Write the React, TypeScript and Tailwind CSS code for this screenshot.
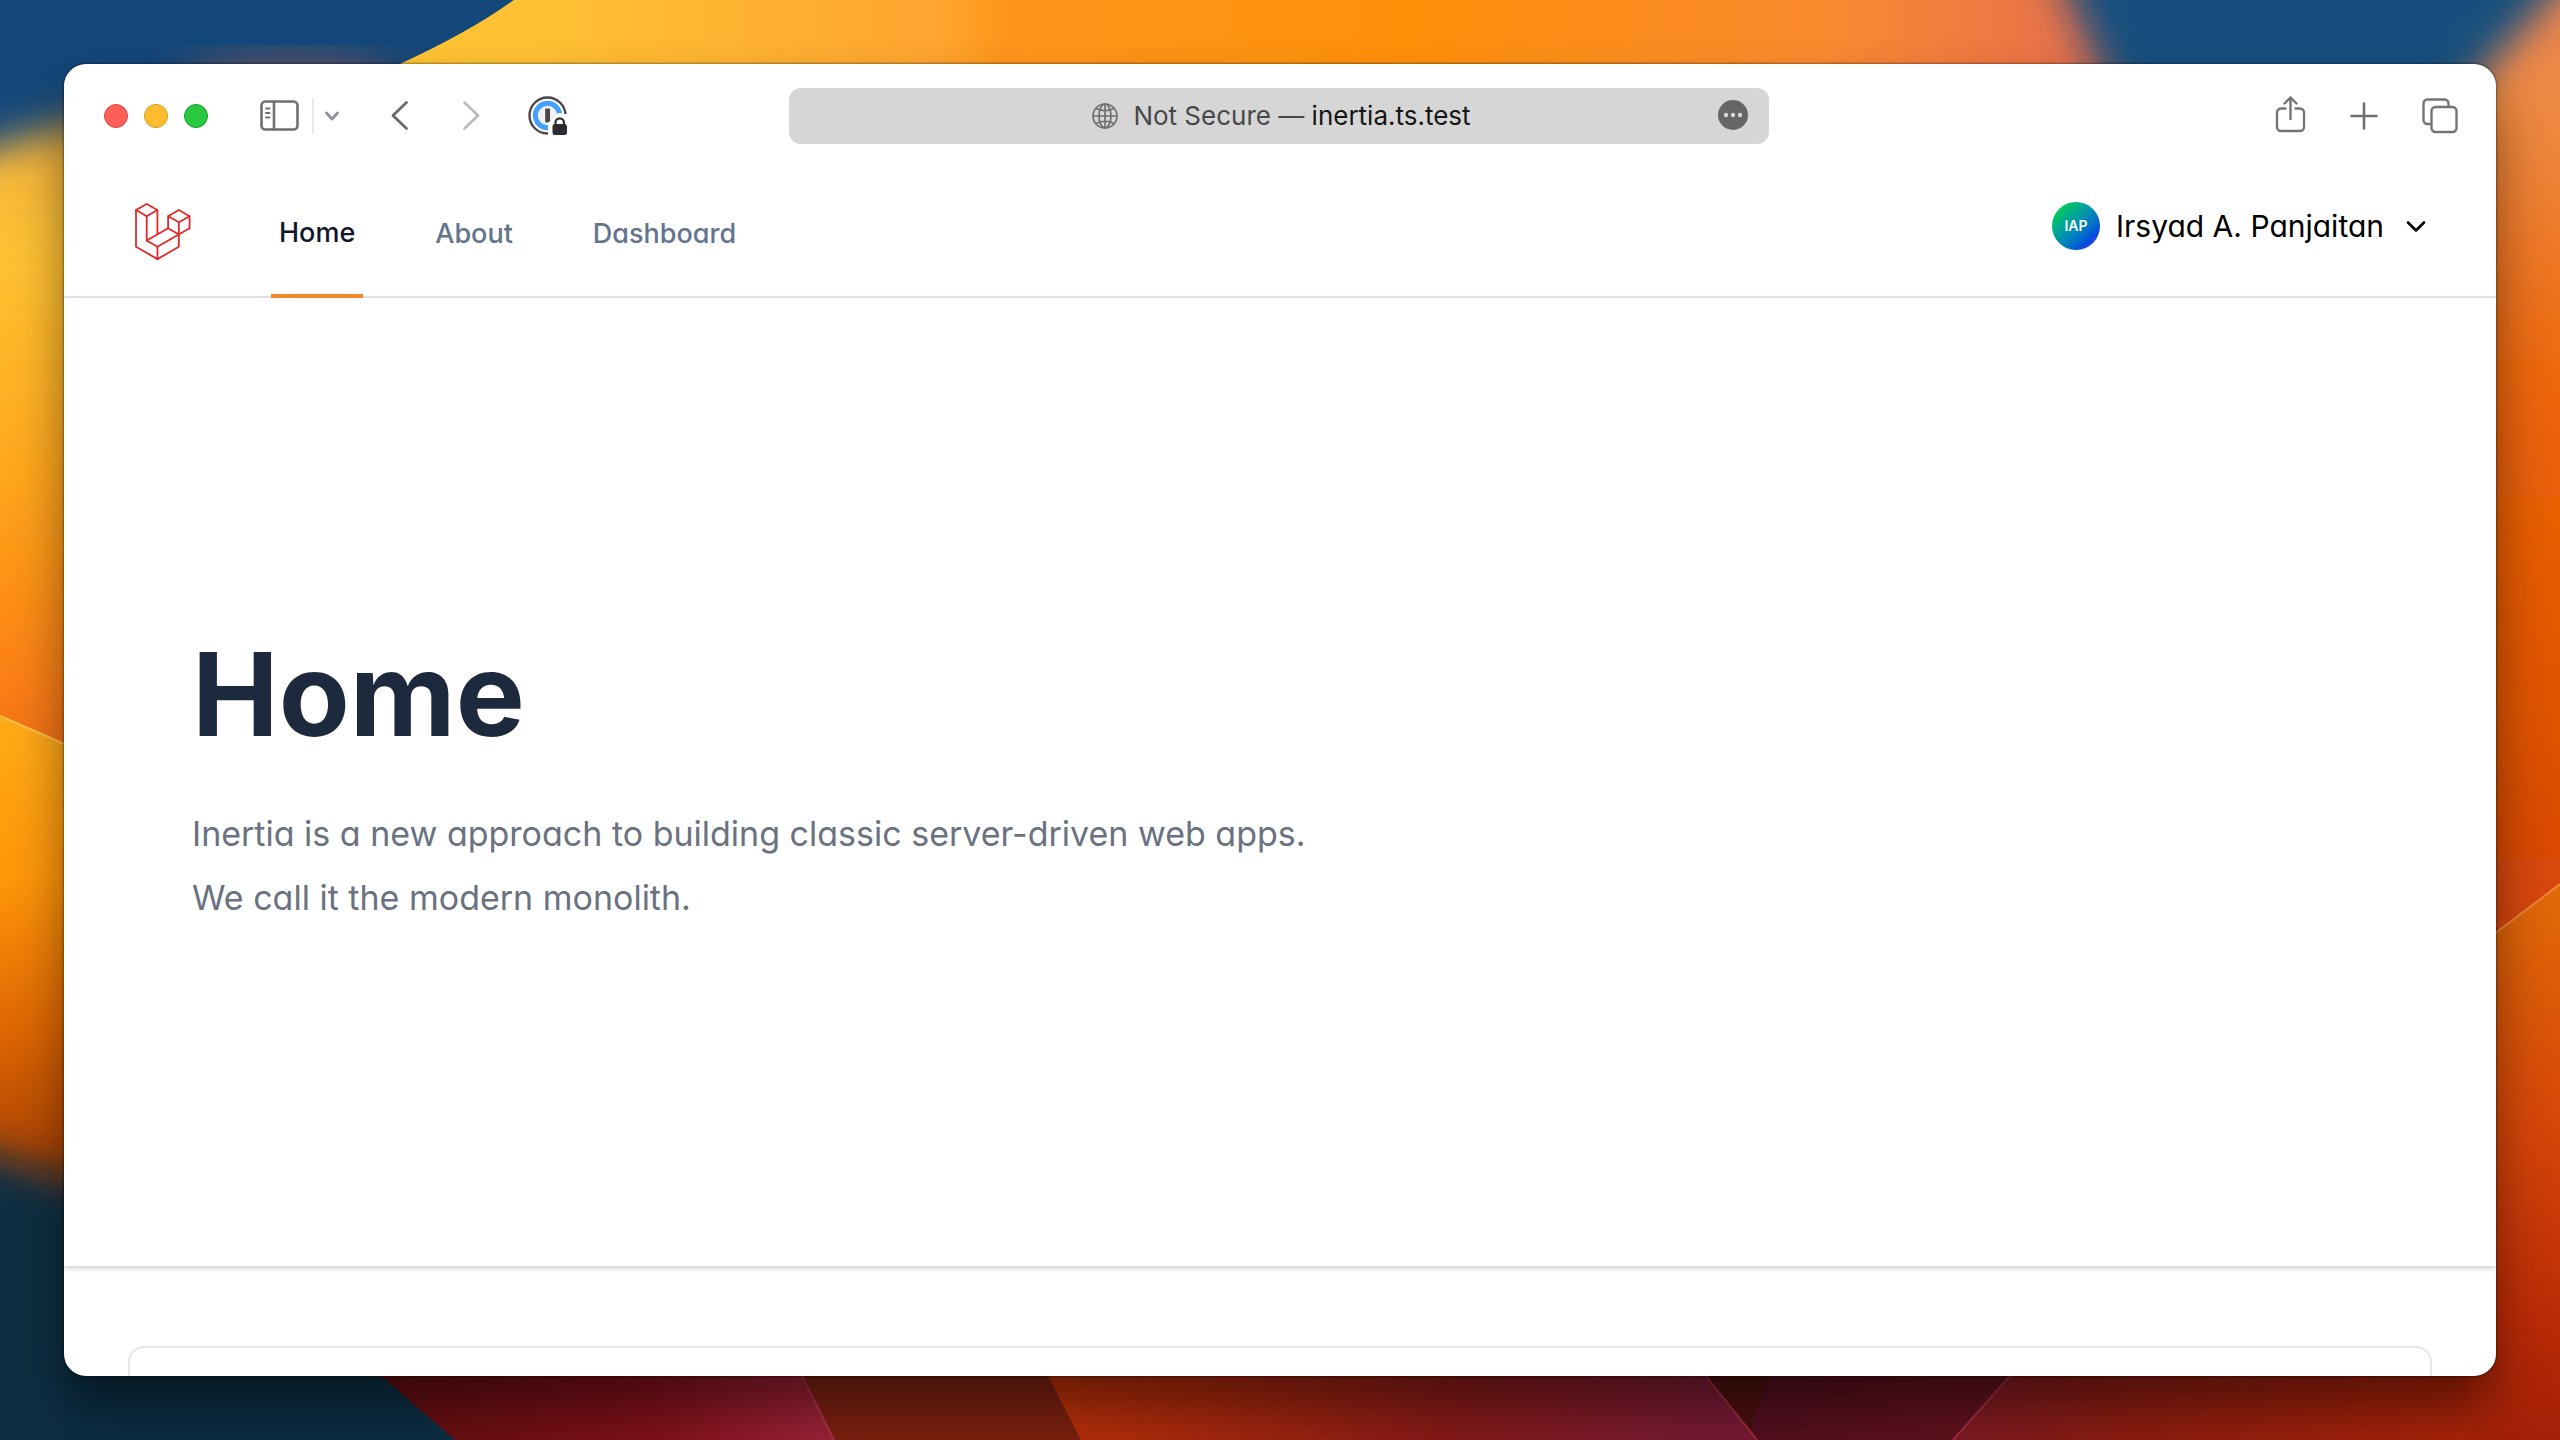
import type { ReactNode } from "react";

function Wallpaper() {
  return (
    <svg
      aria-hidden="true"
      className="absolute inset-0 h-full w-full"
      viewBox="0 0 2560 1440"
      preserveAspectRatio="none"
    >
      <defs>
        <filter id="soft" x="-30%" y="-30%" width="160%" height="160%">
          <feGaussianBlur stdDeviation="20" />
        </filter>
        <linearGradient id="topBand" gradientUnits="userSpaceOnUse" x1="400" y1="0" x2="2080" y2="0">
          <stop offset="0" stopColor="#ffc433" />
          <stop offset="0.1" stopColor="#ffbf33" />
          <stop offset="0.32" stopColor="#ffa530" />
          <stop offset="0.36" stopColor="#ff961c" />
          <stop offset="0.6" stopColor="#ff900a" />
          <stop offset="0.85" stopColor="#fa8a30" />
          <stop offset="1" stopColor="#e8704c" />
        </linearGradient>
        <linearGradient id="leftUpper" x1="0" y1="0" x2="0" y2="1">
          <stop offset="0" stopColor="#f0b040" />
          <stop offset="0.2" stopColor="#ffc233" />
          <stop offset="0.5" stopColor="#ffa51c" />
          <stop offset="0.75" stopColor="#fc8114" />
          <stop offset="1" stopColor="#e85a12" />
        </linearGradient>
        <linearGradient id="leftLower" x1="0" y1="0" x2="0" y2="1">
          <stop offset="0" stopColor="#ffab18" />
          <stop offset="0.3" stopColor="#ff960a" />
          <stop offset="0.58" stopColor="#dd6603" />
          <stop offset="0.8" stopColor="#b04503" />
          <stop offset="1" stopColor="#803a20" />
        </linearGradient>
        <linearGradient id="rightUpper" x1="0" y1="0" x2="0" y2="1">
          <stop offset="0" stopColor="#e88058" />
          <stop offset="0.15" stopColor="#ef8a42" />
          <stop offset="0.4" stopColor="#ec6408" />
          <stop offset="0.7" stopColor="#dd5203" />
          <stop offset="1" stopColor="#cf360f" />
        </linearGradient>
        <linearGradient id="rightLower" x1="0" y1="0" x2="0" y2="1">
          <stop offset="0" stopColor="#e26a08" />
          <stop offset="0.45" stopColor="#d44509" />
          <stop offset="0.8" stopColor="#b82a07" />
          <stop offset="1" stopColor="#a32008" />
        </linearGradient>
        <linearGradient id="red" x1="0" y1="0" x2="1" y2="0">
          <stop offset="0" stopColor="#5c0e10" />
          <stop offset="0.6" stopColor="#7d1018" />
          <stop offset="1" stopColor="#9c2238" />
        </linearGradient>
        <linearGradient id="ember" x1="0" y1="0" x2="1" y2="0.1">
          <stop offset="0" stopColor="#c23508" />
          <stop offset="0.3" stopColor="#a8280c" />
          <stop offset="0.65" stopColor="#861a18" />
          <stop offset="1" stopColor="#761a34" />
        </linearGradient>
        <linearGradient id="maroon" x1="0" y1="0" x2="1" y2="0">
          <stop offset="0" stopColor="#4c0e20" />
          <stop offset="1" stopColor="#66131a" />
        </linearGradient>
        <linearGradient id="bottomRight" x1="0" y1="0" x2="1" y2="0">
          <stop offset="0" stopColor="#7c1a24" />
          <stop offset="0.3" stopColor="#8a1c12" />
          <stop offset="1" stopColor="#a82208" />
        </linearGradient>
      </defs>
      <rect width="2560" height="1440" fill="#14477a" />
      <path d="M514 0 Q470 32 400 64 V200 H2400 V0Z" fill="url(#topBand)" />
      <path d="M2040 -80 L2070 0 L2130 140 V240 H2700 V-80Z" fill="#14507d" filter="url(#soft)" />
      <path d="M514 0 Q470 32 400 64 H0 V0Z" fill="#14477a" />
      <ellipse cx="290" cy="84" rx="110" ry="24" fill="#8a5a55" opacity="0.8" filter="url(#soft)" />
      <path d="M514 0 Q470 32 400 64 H560 V0Z" fill="url(#topBand)" />
      <path d="M-80 170 L120 110 V860 H-80Z" fill="url(#leftUpper)" filter="url(#soft)" />
      <path d="M0 716 L120 768 V1260 H0Z" fill="url(#leftLower)" />
      <path d="M-80 1130 L160 1210 V1500 H-80Z" fill="#0b2d42" filter="url(#soft)" />
      <path d="M0 716 L120 768" stroke="#ffc04a" strokeWidth="2" />
      <path d="M2450 110 L2600 -60 H2700 V1100 H2400 V110Z" fill="url(#rightUpper)" filter="url(#soft)" />
      <path d="M2440 975 L2560 884 V1440 H2440Z" fill="url(#rightLower)" />
      <path d="M2440 975 L2560 884" stroke="#ec8838" strokeWidth="2" />
      <path d="M64 1300 H400 L455 1440 H64Z" fill="#0b2d42" />
      <path d="M350 1300 L381 1376 L455 1440 H836 L790 1300Z" fill="url(#red)" />
      <path d="M790 1300 L802 1376 L834 1440 H1084 L1030 1300Z" fill="#7a2010" />
      <path d="M1030 1300 L1048 1376 L1081 1440 H1760 L1680 1300Z" fill="url(#ember)" />
      <path d="M1680 1300 L1706 1376 L1757 1440 H1960 L2100 1300Z" fill="url(#maroon)" />
      <path d="M1660 1320 L1706 1376 L1750 1430 L1770 1376 V1320Z" fill="#4a100e" />
      <path d="M2100 1300 L2010 1376 L1953 1440 H2470 V1300Z" fill="url(#bottomRight)" />
      <path d="M1706 1376 L1757 1440 M2010 1376 L1953 1440" stroke="#a02a40" strokeWidth="2" />
      <path d="M802 1376 L834 1440" stroke="#a83048" strokeWidth="2" />
    </svg>
  );
}

function ToolButton({ label, className, children }: { label: string; className?: string; children: ReactNode }) {
  return (
    <button type="button" aria-label={label} className={className}>
      {children}
    </button>
  );
}

function SidebarIcon() {
  return (
    <svg className="h-8 w-10" viewBox="0 0 40 32" fill="none" stroke="#6f6f6f" strokeWidth="2.6" strokeLinecap="round">
      <rect x="1.5" y="1.5" width="36" height="28" rx="4" />
      <path d="M14 2 V29" />
      <path d="M6 8.5 H9.5 M6 13 H9.5 M6 17.5 H9.5" strokeWidth="1.8" />
    </svg>
  );
}

function PasswordIcon() {
  return (
    <svg className="size-10" viewBox="0 0 40 40">
      <circle cx="19.5" cy="19.5" r="18" fill="#fff" stroke="#4b4548" strokeWidth="2.4" />
      <circle cx="19.5" cy="19.5" r="12.2" fill="#f1f1f3" stroke="#46a0ff" strokeWidth="5" />
      <rect x="17.2" y="12.5" width="4.8" height="14" rx="0.8" fill="#4b4548" />
      <path d="M20 40 V27 L25 22 a7 7 0 0 1 10 -4 H40 V40Z" fill="#fff" />
      <rect x="24.5" y="28" width="14.5" height="11" rx="2.5" fill="#2e2c30" />
      <path d="M27.5 29 V26.5 a4.2 4.2 0 0 1 8.4 0 V29" fill="none" stroke="#2e2c30" strokeWidth="2.2" />
    </svg>
  );
}

function GlobeIcon() {
  return (
    <svg aria-hidden="true" className="size-7" viewBox="0 0 28 28" fill="none" stroke="#6f6f6f" strokeWidth="1.7">
      <circle cx="14" cy="14" r="12" />
      <ellipse cx="14" cy="14" rx="6" ry="12" />
      <path d="M14 2 V26 M2 14 H26 M5 6.5 Q14 11 23 6.5 M5 21.5 Q14 17 23 21.5" />
    </svg>
  );
}

function LaravelLogo() {
  return (
    <svg className="h-[58px] w-14" viewBox="0 0 50 52" fill="none" stroke="#e02826" strokeWidth="1.6" strokeLinejoin="round" strokeLinecap="round">
      <path d="M0.8 6.3 L10.4 0.9 L20 6.3 L10.4 11.9Z" />
      <path d="M0.8 6.3 V39.2 L20 50.3 L39.2 39.2 V28.3" />
      <path d="M10.4 11.9 V33.7 L20 39.2 V50.3" />
      <path d="M20 6.3 V28.2 M10.4 33.7 L29.6 22.7 M20 39.2 L48.8 22.7" />
      <path d="M29.6 11.8 L39.2 6.2 L48.8 11.8 L39.2 17.3Z" />
      <path d="M29.6 11.8 V22.7 L39.2 28.2 V17.3 M48.8 11.8 V22.7" />
    </svg>
  );
}

function Toolbar() {
  return (
    <div className="grid h-[104px] shrink-0 grid-cols-[1fr_minmax(0,980px)_1fr] items-center pr-[38px] pl-9">
      <div className="ml-1 flex items-center">
        <div className="flex gap-4">
          <button type="button" aria-label="Close" className="size-6 rounded-full border border-[#d9473f] bg-[#ff5f57]" />
          <button type="button" aria-label="Minimize" className="size-6 rounded-full border border-[#d39a22] bg-[#febc2e]" />
          <button type="button" aria-label="Zoom" className="size-6 rounded-full border border-[#1f9a32] bg-[#28c840]" />
        </div>
        <ToolButton label="Show sidebar" className="ml-13">
          <SidebarIcon />
        </ToolButton>
        <span className="ml-3 h-9 w-0.5 bg-[#ececec]" />
        <ToolButton label="Tab groups" className="ml-2.5">
          <svg className="size-4" viewBox="0 0 16 16" fill="none" stroke="#8e9196" strokeWidth="2.8" strokeLinecap="round" strokeLinejoin="round">
            <path d="M2.5 5 L8 11 L13.5 5" />
          </svg>
        </ToolButton>
        <ToolButton label="Back" className="ml-12.5">
          <svg className="h-8 w-5" viewBox="0 0 20 32" fill="none" stroke="#6a6a6a" strokeWidth="2.8" strokeLinecap="round" strokeLinejoin="round">
            <path d="M16.5 2.5 L3 15.5 L16.5 28.5" />
          </svg>
        </ToolButton>
        <ToolButton label="Forward" className="ml-13">
          <svg className="h-8 w-5" viewBox="0 0 20 32" fill="none" stroke="#bdbdbf" strokeWidth="2.8" strokeLinecap="round" strokeLinejoin="round">
            <path d="M2.5 2.5 L16 15.5 L2.5 28.5" />
          </svg>
        </ToolButton>
        <ToolButton label="1Password" className="ml-11.5">
          <PasswordIcon />
        </ToolButton>
      </div>
      <div className="flex h-14 items-center rounded-xl bg-[#d6d6d6] px-5">
        <span className="w-8" />
        <div className="flex flex-1 items-center justify-center gap-3.5 pl-1">
          <GlobeIcon />
          <p className="text-[26px] leading-8 text-[#48484a]">
            Not Secure — <span className="text-[#161616]">inertia.ts.test</span>
          </p>
        </div>
        <ToolButton label="Page menu">
          <svg className="size-8" viewBox="0 0 32 32">
            <circle cx="16" cy="15" r="15" fill="#666" />
            <g fill="#d6d6d6">
              <circle cx="9" cy="15" r="2.2" />
              <circle cx="16" cy="15" r="2.2" />
              <circle cx="23" cy="15" r="2.2" />
            </g>
          </svg>
        </ToolButton>
      </div>
      <div className="flex items-center justify-end gap-11">
        <ToolButton label="Share">
          <svg className="h-10 w-8" viewBox="0 0 32 40" fill="none" stroke="#747474" strokeWidth="2.4" strokeLinecap="round" strokeLinejoin="round">
            <path d="M11.5 12.5 H7 a4 4 0 0 0 -4 4 V31 a4 4 0 0 0 4 4 H26 a4 4 0 0 0 4 -4 V16.5 a4 4 0 0 0 -4 -4 H21.5" />
            <path d="M16.5 23 V1.5 M10.5 7.5 L16.5 1.5 L22.5 7.5" />
          </svg>
        </ToolButton>
        <ToolButton label="New tab">
          <svg className="size-7" viewBox="0 0 28 28" fill="none" stroke="#6f6f6f" strokeWidth="2.6" strokeLinecap="round">
            <path d="M14 1.5 V26.5 M1.5 14 H26.5" />
          </svg>
        </ToolButton>
        <ToolButton label="Tab overview">
          <svg className="size-9" viewBox="0 0 36 36" fill="none" stroke="#747474" strokeWidth="2.4" strokeLinejoin="round">
            <rect x="9.5" y="9" width="25" height="25" rx="4" />
            <path d="M9.5 26 H5.500 a4 4 0 0 1 -4 -4 V5.500 a4 4 0 0 1 4 -4 H22.500 a4 4 0 0 1 4 4 V9" />
          </svg>
        </ToolButton>
      </div>
    </div>
  );
}

function NavBar() {
  return (
    <nav className="flex h-[130px] shrink-0 items-stretch border-b-2 border-slate-200 pr-16 pl-[71px] text-[27px] leading-10 font-medium">
      <a href="#home" aria-label="Laravel" className="mt-[35px] self-start">
        <LaravelLogo />
      </a>
      <div className="ml-20 flex flex-1 gap-16">
        <a href="#home" aria-current="page" className="-mb-0.5 flex items-center border-b-4 border-[#f68b2c] px-2 pt-1 text-slate-900">
          Home
        </a>
        <a href="#about" className="flex items-center px-2 pt-1 text-slate-500">
          About
        </a>
        <a href="#dashboard" className="flex items-center px-2 pt-1 text-slate-500">
          Dashboard
        </a>
      </div>
      <button type="button" aria-haspopup="menu" className="mt-[34px] flex h-12 items-center self-start text-[30px] font-normal text-black">
        <span className="flex size-12 items-center justify-center rounded-full bg-linear-135 from-[#22d03c] from-10% to-[#1345e0] to-80% text-[14px] font-semibold text-white">
          IAP
        </span>
        <span className="ml-4">Irsyad A. Panjaitan</span>
        <svg aria-hidden="true" className="ml-4 size-8" viewBox="0 0 32 32" fill="none" stroke="#000" strokeWidth="2.6" strokeLinecap="round" strokeLinejoin="round">
          <path d="M8 12.5 L16 20.5 L24 12.5" />
        </svg>
      </button>
    </nav>
  );
}

export default function App() {
  return (
    <div className="relative flex h-screen overflow-hidden p-16 font-[Inter,'Liberation_Sans',sans-serif]">
      <Wallpaper />
      <div className="relative flex min-w-0 flex-1 flex-col overflow-hidden rounded-[22px] bg-white shadow-[0_0_2px_1px_rgba(0,0,0,0.35),0_30px_50px_rgba(0,0,0,0.45)]">
        <Toolbar />
        <div className="flex flex-col [font-feature-settings:'cv11']">
          <NavBar />
          <header className="flex shrink-0 flex-col gap-12 px-32 py-[336px] shadow-[0_2px_6px_rgba(0,0,0,0.2)]">
            <h1 className="text-[116px] leading-[120px] font-bold text-slate-800">Home</h1>
            <p className="text-[34px] leading-[64px] text-gray-500">
              Inertia is a new approach to building classic server-driven web apps.
              <br />
              We call it the modern monolith.
            </p>
          </header>
          <main className="px-16 pt-20">
            <section aria-label="Content" className="h-40 rounded-2xl border-2 border-gray-200" />
          </main>
        </div>
      </div>
    </div>
  );
}
